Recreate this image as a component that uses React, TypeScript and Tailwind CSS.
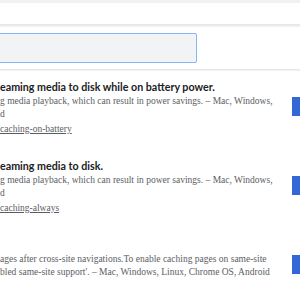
const rows = [
  {
    title: "eaming media to disk while on battery power.",
    desc: ["g media playback, which can result in power savings. – Mac, Windows,", "d"],
    link: "caching-on-battery",
  },
  {
    title: "eaming media to disk.",
    desc: ["g media playback, which can result in power savings. – Mac, Windows,", "d"],
    link: "caching-always",
  },
  {
    title: "\u00a0",
    desc: [
      "ages after cross-site navigations.To enable caching pages on same-site",
      "bled same-site support'. – Mac, Windows, Linux, Chrome OS, Android",
    ],
    link: "",
  },
];

export default function App() {
  return (
    <div className="h-[300px] w-[300px] overflow-hidden bg-white">
      <div className="h-[3px] bg-[#f1f1f1]" />
      <div className="h-[21px] bg-white" />
      <div className="h-[3px] bg-gradient-to-b from-[#e4e4e4] to-[#f4f4f4]" />
      <div className="flex h-[42px] items-center bg-white">
        <div className="-ml-2 h-[30px] w-[205px] rounded-[2px] border border-[#8ab4f8] bg-[#f1f3f4]" />
      </div>
      <div className="h-[2px] bg-gradient-to-b from-[#e4e4e4] to-[#f4f4f4]" />
      <div className="flex flex-col pt-[8px]">
        {rows.map((row, i) => (
          <div key={i} className="flex h-[79px] justify-between">
            <div className="flex flex-col">
              <p className="h-[16px] font-['Lato',sans-serif] text-[10.7px] font-bold leading-[16px] text-[#202124] whitespace-nowrap">
                {row.title}
              </p>
              {row.desc.map((line, j) => (
                <p key={j} className="font-['Liberation_Serif',serif] text-[9.5px] leading-[13px] text-[#5a5e63] whitespace-nowrap">
                  {line}
                </p>
              ))}
              {row.link && (
                <p className="mt-[2px] font-['Liberation_Serif',serif] text-[9.5px] leading-[13px] text-[#5a5e63] underline">
                  {row.link}
                </p>
              )}
            </div>
            <div className="mt-[18px] h-[19px] w-[8px] bg-[#3367d6]" />
          </div>
        ))}
      </div>
    </div>
  );
}
